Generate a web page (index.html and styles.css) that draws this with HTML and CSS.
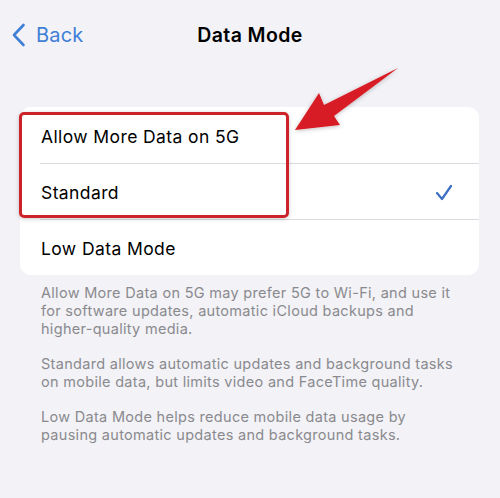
FILE: index.html
```html
<!DOCTYPE html>
<html>
<head>
<meta charset="utf-8">
<link rel="stylesheet" href="styles.css">
</head>
<body>
<div class="screen">
  <header class="nav">
    <div class="back">
      <svg class="chev" width="15" height="24" viewBox="0 0 15 24"><path d="M12.5 2 L3 12 L12.5 22" fill="none" stroke="#3f7fd6" stroke-width="2.6" stroke-linecap="round" stroke-linejoin="round"/></svg>
      <span>Back</span>
    </div>
    <div class="title">Data Mode</div>
  </header>
  <div class="card">
    <div class="row"><span>Allow More Data on 5G</span></div>
    <div class="row sep"><span>Standard</span>
      <svg class="check" width="18" height="17" viewBox="0 0 18 17"><path d="M2 9 L7 15 L16 2" fill="none" stroke="#3b6fc4" stroke-width="2.2" stroke-linecap="round" stroke-linejoin="round"/></svg>
    </div>
    <div class="row sep"><span>Low Data Mode</span></div>
    <div class="highlight"></div>
  </div>
  <div class="notes">
    <p>Allow More Data on 5G may prefer 5G to Wi-Fi, and use it for software updates, automatic iCloud backups and higher-quality media.</p>
    <p>Standard allows automatic updates and background tasks on mobile data, but limits video and FaceTime quality.</p>
    <p>Low Data Mode helps reduce mobile data usage by pausing automatic updates and background tasks.</p>
  </div>
  <svg class="arrow" width="500" height="200" viewBox="0 0 500 200">
    <defs>
      <filter id="sh" x="-20%" y="-20%" width="140%" height="140%">
        <feDropShadow dx="0" dy="1" stdDeviation="2" flood-color="#000" flood-opacity="0.25"/>
      </filter>
    </defs>
    <polygon points="295,130 319,93 324,105 398,68 334,116 340,125" fill="#d81e25" filter="url(#sh)"/>
  </svg>
</div>
</body>
</html>
```

FILE: styles.css
```css
html, body {
  margin: 0;
  padding: 0;
  background: #f2f2f7;
}
body {
  font-family: Inter, "Noto Sans", "Liberation Sans", sans-serif;
  color: #000;
  width: 500px;
  height: 498px;
  overflow: hidden;
}
.screen {
  position: relative;
  width: 500px;
  height: 498px;
}
.nav {
  position: relative;
  height: 70px;
  display: flex;
  align-items: center;
  justify-content: center;
}
.back {
  position: absolute;
  left: 11px;
  top: 23px;
  display: flex;
  align-items: center;
  gap: 10px;
  color: #3f7fd6;
  font-size: 20px;
  letter-spacing: 0.2px;
  height: 24px;
}
.title {
  font-size: 19.5px;
  font-weight: 600;
  letter-spacing: 0.4px;
}
.card {
  position: relative;
  margin: 37px 21px 0 20px;
  background: #fff;
  border-radius: 11px;
}
.row {
  height: 56px;
  box-sizing: border-box;
  padding: 2px 26px 0 21px;
  display: flex;
  align-items: center;
  justify-content: space-between;
  font-size: 17.5px;
  letter-spacing: 0.4px;
  position: relative;
}
.row.sep::before {
  content: "";
  position: absolute;
  left: 20px;
  right: 0;
  top: 0;
  border-top: 1px solid #dcdce0;
}
.check {
  display: block;
}
.highlight {
  position: absolute;
  left: -1px;
  top: 5px;
  width: 264px;
  height: 100px;
  border: 3px solid #cc2229;
  border-radius: 5px;
  box-shadow: 0 1px 4px rgba(0,0,0,0.2);
}
.notes {
  width: 418px;
  padding: 9px 0 0 41px;
  color: #8a8a8e;
  font-size: 14.5px;
  letter-spacing: 0.3px;
  line-height: 18px;
}
.notes p {
  margin: 0 0 17px 0;
}
.arrow {
  position: absolute;
  left: 0;
  top: 0;
}
```
